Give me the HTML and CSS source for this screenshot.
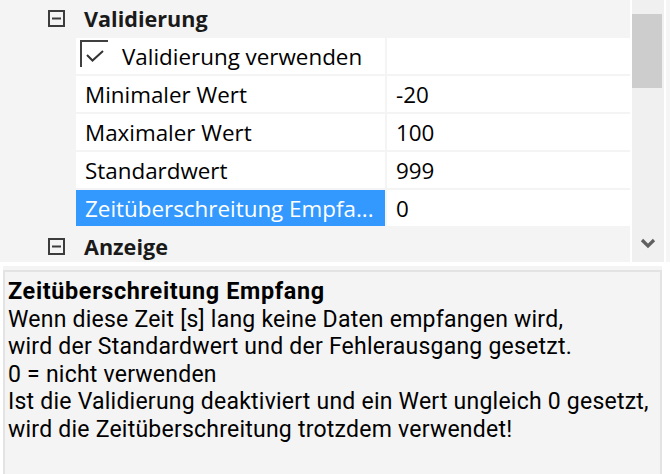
FILE: index.html
```html
<!DOCTYPE html>
<html>
<head>
<meta charset="utf-8">
<link rel="stylesheet" href="styles.css">
</head>
<body>
<div class="top">
  <div class="grid">
    <div class="category">
      <svg class="toggle" width="17" height="17" viewBox="0 0 17 17"><rect x="1" y="1" width="15" height="15" fill="none" stroke="#3c3c3c" stroke-width="2"/><rect x="4" y="7.5" width="9" height="2" fill="#3c3c3c"/></svg>
      <span class="cat-label">Validierung</span>
    </div>
    <div class="row">
      <div class="name check-cell">
        <svg class="checkbox" width="28" height="27" viewBox="0 0 28 27"><path d="M1 27V1H28" fill="none" stroke="#404040" stroke-width="2"/><path d="M7 15L12.5 20.5L23 11" fill="none" stroke="#333" stroke-width="2"/></svg>
        <span>Validierung verwenden</span>
      </div>
      <div class="value"></div>
    </div>
    <div class="row">
      <div class="name">Minimaler Wert</div>
      <div class="value">-20</div>
    </div>
    <div class="row">
      <div class="name">Maximaler Wert</div>
      <div class="value">100</div>
    </div>
    <div class="row">
      <div class="name">Standardwert</div>
      <div class="value">999</div>
    </div>
    <div class="row">
      <div class="name selected">Zeitüberschreitung Empfa...</div>
      <div class="value">0</div>
    </div>
    <div class="category">
      <svg class="toggle" width="17" height="17" viewBox="0 0 17 17"><rect x="1" y="1" width="15" height="15" fill="none" stroke="#3c3c3c" stroke-width="2"/><rect x="4" y="7.5" width="9" height="2" fill="#3c3c3c"/></svg>
      <span class="cat-label">Anzeige</span>
    </div>
  </div>
  <div class="scrollbar">
    <div class="thumb"></div>
    <svg class="arrow" width="16" height="14" viewBox="0 0 16 14"><path d="M2 3L8 9L14 3" fill="none" stroke="#606060" stroke-width="3.2"/></svg>
  </div>
  <div class="edge"></div>
</div>
<div class="help">
  <div class="help-outer">
    <div class="help-box">
      <div class="help-title">Zeitüberschreitung Empfang</div>
      <div class="help-line">Wenn diese Zeit [s] lang keine Daten empfangen wird,</div>
      <div class="help-line">wird der Standardwert und der Fehlerausgang gesetzt.</div>
      <div class="help-line">0 = nicht verwenden</div>
      <div class="help-line">Ist die Validierung deaktiviert und ein Wert ungleich 0 gesetzt,</div>
      <div class="help-line">wird die Zeitüberschreitung trotzdem verwendet!</div>
    </div>
  </div>
</div>
</body>
</html>
```
FILE: styles.css
```css
html, body {
  margin: 0;
  padding: 0;
}
body {
  width: 670px;
  height: 474px;
  overflow: hidden;
  background: #ffffff;
  font-family: "Open Sans", "Noto Sans", sans-serif;
  color: #000;
}
.top {
  display: flex;
  height: 262px;
  gap: 2px;
  background: #ffffff;
  overflow: hidden;
}
.grid {
  width: 630px;
  flex: none;
  background: #f4f4f4;
  display: flex;
  flex-direction: column;
  gap: 2px;
}
.category {
  height: 36px;
  flex: none;
  display: flex;
  align-items: center;
  padding-left: 48px;
  gap: 19px;
}
.toggle {
  flex: none;
}
.cat-label {
  font-weight: 700;
  font-size: 21.6px;
  color: #1a1a1a;
}
.row {
  height: 36px;
  flex: none;
  display: flex;
  gap: 2px;
  margin-left: 76px;
  font-size: 22.4px;
}
.name {
  width: 309px;
  flex: none;
  background: #fff;
  padding-left: 9px;
  box-sizing: border-box;
  display: flex;
  align-items: center;
  white-space: nowrap;
  overflow: hidden;
}
.check-cell {
  padding-left: 4px;
  gap: 14px;
  align-items: flex-start;
}
.check-cell .checkbox {
  margin-top: 2px;
  flex: none;
}
.check-cell span {
  align-self: center;
}
.selected {
  background: #3399ff;
  color: #fff;
}
.value {
  flex: 1;
  background: #fff;
  padding-left: 9px;
  display: flex;
  align-items: center;
}
.scrollbar {
  width: 32px;
  flex: none;
  background: #f0f0f0;
  display: flex;
  flex-direction: column;
}
.thumb {
  width: 30px;
  height: 74px;
  margin-top: 14px;
  background: #cdcdcd;
}
.arrow {
  margin-top: auto;
  margin-bottom: 11px;
  margin-left: 8px;
}
.edge {
  flex: 1;
  background: #f6f6f6;
}
.help {
  padding-top: 4px;
  padding-left: 3px;
  padding-right: 8px;
  height: 212px;
  box-sizing: border-box;
  background: #fff;
}
.help-outer {
  background: #f4f4f4;
  padding-top: 4px;
  height: 100%;
  box-sizing: border-box;
}
.help-box {
  border: 2px solid #e3e3e3;
  border-bottom: none;
  height: 100%;
  box-sizing: border-box;
  padding: 6px 3px 0;
  font-family: Roboto, "Open Sans", sans-serif;
  font-size: 23px;
  letter-spacing: 0.23px;
  line-height: 27.5px;
  white-space: nowrap;
}
.help-title {
  font-weight: 700;
  font-size: 23.4px;
  letter-spacing: 0.65px;
}
```
